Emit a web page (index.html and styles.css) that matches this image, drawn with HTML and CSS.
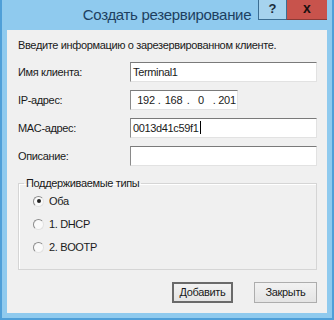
FILE: index.html
```html
<!DOCTYPE html>
<html lang="ru">
<head>
<meta charset="utf-8">
<title>Создать резервирование</title>
<link rel="stylesheet" href="styles.css">
</head>
<body>
<div class="window">
  <div class="titlebar">
    <div class="spacer"></div>
    <div class="title">Создать резервирование</div>
    <div class="controls">
      <div class="btn-help">?</div>
      <div class="btn-close">x</div>
    </div>
  </div>
  <div class="panel">
    <div class="intro">Введите информацию о зарезервированном клиенте.</div>
    <div class="form">
      <div class="label">Имя клиента:</div>
      <div class="input wide">Terminal1</div>
      <div class="label">IP-адрес:</div>
      <div class="input ip">
        <span class="oct">192</span><span class="dot">.</span>
        <span class="oct">168</span><span class="dot">.</span>
        <span class="oct">0</span><span class="dot">.</span>
        <span class="oct">201</span>
      </div>
      <div class="label">MAC-адрес:</div>
      <div class="input wide mac">0013d41c59f1<span class="caret"></span></div>
      <div class="label">Описание:</div>
      <div class="input wide"></div>
    </div>
    <fieldset class="group">
      <legend>Поддерживаемые типы</legend>
      <div class="radio"><span class="circle checked"></span><span>Оба</span></div>
      <div class="radio"><span class="circle"></span><span>1. DHCP</span></div>
      <div class="radio"><span class="circle"></span><span>2. BOOTP</span></div>
    </fieldset>
    <div class="buttons">
      <div class="button default">Добавить</div>
      <div class="button close">Закрыть</div>
    </div>
  </div>
</div>
</body>
</html>
```
FILE: styles.css
```css
html, body {
  margin: 0;
  padding: 0;
}
body {
  width: 334px;
  height: 320px;
  overflow: hidden;
  font-family: "Liberation Sans", Arial, sans-serif;
  font-size: 11px;
  letter-spacing: -0.35px;
  color: #1a1a1a;
}
.window {
  width: 334px;
  height: 320px;
  box-sizing: border-box;
  background: #8fcaee;
  border-left: 2px solid #4f9fd8;
  border-right: 2px solid #4f9fd8;
  border-bottom: 2px solid #4f9fd8;
  display: flex;
  flex-direction: column;
}
.titlebar {
  height: 30px;
  flex: none;
  display: grid;
  grid-template-columns: 1fr auto 1fr;
  align-items: start;
}
.title {
  font-size: 15px;
  letter-spacing: -0.3px;
  color: #1d3f60;
  line-height: 30px;
  white-space: nowrap;
}
.controls {
  justify-self: end;
  display: flex;
  margin-right: 5px;
  letter-spacing: 0;
}
.btn-help {
  width: 28px;
  height: 20px;
  box-sizing: border-box;
  background: #a6d3ee;
  border: 1px solid #3b6e93;
  border-top: none;
  border-right: none;
  font-weight: bold;
  font-size: 13px;
  color: #1c2c3c;
  text-align: center;
  line-height: 18px;
}
.btn-close {
  width: 41px;
  height: 20px;
  box-sizing: border-box;
  background: #c8534c;
  border-left: 1px solid #3b6e93;
  border-bottom: 1px solid #8a3a36;
  font-weight: bold;
  font-size: 14px;
  color: #1a1010;
  text-align: center;
  line-height: 17px;
}
.panel {
  flex: 1;
  margin: 0 5px 5px;
  background: #f0f0f0;
  padding: 8px 10px 0 11px;
  display: flex;
  flex-direction: column;
}
.intro {
  line-height: 15px;
  white-space: nowrap;
}
.form {
  margin-top: 9px;
  display: grid;
  grid-template-columns: 112px 1fr;
  row-gap: 8px;
  align-items: center;
}
.label {
  line-height: 20px;
}
.input {
  height: 20px;
  box-sizing: border-box;
  background: #fff;
  border: 1px solid #e2e2e2;
  border-top-color: #7a7a7a;
  border-left-color: #8a8a8a;
  padding-left: 2px;
  line-height: 18px;
  white-space: nowrap;
}
.input.ip {
  width: 108px;
  display: flex;
  padding-left: 6px;
}
.oct {
  display: inline-block;
  text-align: center;
  width: 18px;
}
.dot {
  display: inline-block;
  width: 8px;
  text-align: center;
}
.ip .oct:nth-of-type(3) { width: 21px; }
.mac .caret {
  display: inline-block;
  width: 1px;
  height: 13px;
  background: #000;
  vertical-align: -2px;
  margin-left: 1px;
}
.group {
  margin: 10px 0 0;
  padding: 2px 0 14px 14px;
  border: 1px solid #d5d5d5;
  box-shadow: inset 1px 1px 0 #fff;
  display: flex;
  flex-direction: column;
  gap: 7px;
}
.group legend {
  padding: 0 2px;
  margin-left: -9px;
  line-height: 15px;
}
.radio {
  display: flex;
  align-items: center;
  gap: 5px;
  height: 16px;
}
.circle {
  width: 11px;
  height: 11px;
  box-sizing: border-box;
  border-radius: 50%;
  border: 1px solid;
  border-color: #8c8c8c #e2e2e2 #e2e2e2 #8c8c8c;
  background: #fafafa;
  position: relative;
}
.circle.checked::after {
  content: "";
  position: absolute;
  left: 2.5px;
  top: 2.5px;
  width: 4px;
  height: 4px;
  border-radius: 50%;
  background: #222;
}
.buttons {
  margin-top: 12px;
  display: flex;
  justify-content: flex-end;
  gap: 21px;
}
.button {
  height: 21px;
  box-sizing: border-box;
  border: 1px solid #adadad;
  background: linear-gradient(#f2f2f2, #e4e4e4);
  text-align: center;
  line-height: 19px;
}
.button.default {
  width: 61px;
  border: 2px solid #6a6a6a;
  line-height: 17px;
}
.button.close {
  width: 63px;
}
```
